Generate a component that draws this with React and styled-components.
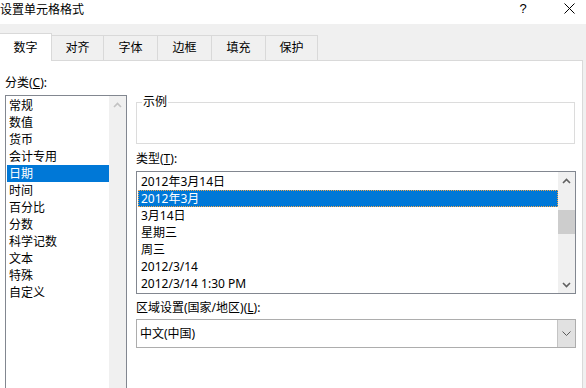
import React from 'react';
import styled, { createGlobalStyle } from 'styled-components';

const categories = ['常规', '数值', '货币', '会计专用', '日期', '时间', '百分比', '分数', '科学记数', '文本', '特殊', '自定义'];

const types = ['2012年3月14日', '2012年3月', '3月14日', '星期三', '周三', '2012/3/14', '2012/3/14 1:30 PM'];

const tabs = [
    { label: '数字', w: 53 },
    { label: '对齐', w: 53 },
    { label: '字体', w: 55 },
    { label: '边框', w: 55 },
    { label: '填充', w: 55 },
    { label: '保护', w: 53 },
];

const Chevron = ({ dir = 'up', color = '#606060' }) => (
    <svg width="9" height="6" viewBox="0 0 9 6">
        <path
            d={dir === 'up' ? 'M1 5 L4.5 1.5 L8 5' : 'M1 1 L4.5 4.5 L8 1'}
            fill="none"
            stroke={color}
            strokeWidth="1.6"
        />
    </svg>
);

const App = () => {
    return (
        <>
            <GlobalStyle />
            <Dialog>
                <TitleBar>
                    <Title>设置单元格格式</Title>
                    <CaptionButton>?</CaptionButton>
                    <CaptionButton>
                        <svg width="11" height="11" viewBox="0 0 11 11">
                            <path d="M0.5 0.5 L10.5 10.5 M10.5 0.5 L0.5 10.5" stroke="#000" strokeWidth="1" />
                        </svg>
                    </CaptionButton>
                </TitleBar>

                <Body>
                    <TabStrip>
                        {tabs.map((t, i) => (
                            <Tab key={t.label} $active={i === 0} $w={t.w}>
                                {t.label}
                            </Tab>
                        ))}
                    </TabStrip>

                    <Panel>
                        <LeftCol>
                            <Label>
                                分类(<Key>C</Key>):
                            </Label>
                            <ListBox $tall>
                                <Items>
                                    {categories.map((c) => (
                                        <Item key={c} $selected={c === '日期'} $pad={2}>
                                            {c}
                                        </Item>
                                    ))}
                                </Items>
                                <ScrollBar>
                                    <ArrowBtn>
                                        <Chevron dir="up" color="#c2c2c2" />
                                    </ArrowBtn>
                                </ScrollBar>
                            </ListBox>
                        </LeftCol>

                        <RightCol>
                            <Group>
                                <Legend>示例</Legend>
                            </Group>

                            <Label $top={6}>
                                类型(<Key>T</Key>):
                            </Label>
                            <ListBox>
                                <Items>
                                    {types.map((t) => (
                                        <Item key={t} $selected={t === '2012年3月'} $focus $pad={3}>
                                            {t}
                                        </Item>
                                    ))}
                                </Items>
                                <ScrollBar>
                                    <ArrowBtn>
                                        <Chevron dir="up" />
                                    </ArrowBtn>
                                    <Track>
                                        <Thumb />
                                    </Track>
                                    <ArrowBtn>
                                        <Chevron dir="down" />
                                    </ArrowBtn>
                                </ScrollBar>
                            </ListBox>

                            <Label $top={5}>
                                区域设置(国家/地区)(<Key>L</Key>):
                            </Label>
                            <Select>
                                <SelectValue>中文(中国)</SelectValue>
                                <DropButton>
                                    <svg width="9" height="5" viewBox="0 0 9 5">
                                        <path d="M0.5 0.5 L4.5 4.5 L8.5 0.5" fill="none" stroke="#5a5a5a" strokeWidth="1" />
                                    </svg>
                                </DropButton>
                            </Select>
                        </RightCol>
                    </Panel>
                </Body>
            </Dialog>
        </>
    );
};

const GlobalStyle = createGlobalStyle`
    html, body {
        margin: 0;
        padding: 0;
        background: #f0f0f0;
    }

    body {
        font-family: "Noto Sans", "Noto Sans CJK SC", sans-serif;
        font-size: 12px;
        color: #000;
    }
`;

const Dialog = styled.div`
    width: 586px;
    height: 388px;
    overflow: hidden;
    background: #f0f0f0;
    display: flex;
    flex-direction: column;
`;

const TitleBar = styled.div`
    height: 24px;
    flex: none;
    background: #fff;
    display: flex;
    align-items: center;
    overflow: hidden;
`;

const Title = styled.div`
    width: 500px;
    flex: none;
    line-height: 17px;
    margin-top: -5px;
`;

const CaptionButton = styled.div`
    width: 46px;
    flex: none;
    height: 24px;
    margin-top: -8px;
    display: flex;
    align-items: center;
    justify-content: center;
    font-family: "Liberation Sans", sans-serif;
    font-size: 13px;

    &:first-of-type {
        width: 45px;
    }
`;

const Body = styled.div`
    flex: 1;
    display: flex;
    flex-direction: column;
    padding-top: 9px;
    margin-left: -1px;
    margin-right: 3px;
`;

const TabStrip = styled.div`
    display: flex;
    align-items: flex-end;
    height: 28px;
    position: relative;
    z-index: 1;
`;

const Tab = styled.div`
    box-sizing: border-box;
    width: ${(p) => p.$w}px;
    margin-left: -1px;
    border: 1px solid #d9d9d9;
    border-bottom: none;
    text-align: center;
    line-height: 17px;
    background: ${(p) => (p.$active ? '#fff' : '#f0f0f0')};
    height: ${(p) => (p.$active ? 28 : 25)}px;
    padding-top: ${(p) => (p.$active ? 5 : 3)}px;
    margin-bottom: ${(p) => (p.$active ? 0 : 1)}px;

    &:first-child {
        margin-left: 0;
    }
`;

const Panel = styled.div`
    flex: 1;
    margin-top: -1px;
    background: #fff;
    border: 1px solid #d9d9d9;
    display: grid;
    grid-template-columns: 122px 440px;
    column-gap: 9px;
    align-items: start;
    padding-left: 5px;
`;

const LeftCol = styled.div`
    display: flex;
    flex-direction: column;
    padding-top: 13px;
`;

const RightCol = styled.div`
    display: flex;
    flex-direction: column;
    padding-top: 41px;
`;

const Label = styled.div`
    line-height: 17px;
    height: 17px;
    margin-top: ${(p) => p.$top || 0}px;
    margin-bottom: ${(p) => (p.$top === 5 ? 3 : 4)}px;
    white-space: nowrap;
`;

const Key = styled.span`
    text-decoration: underline;
`;

const ListBox = styled.div`
    box-sizing: border-box;
    height: ${(p) => (p.$tall ? 320 : 123)}px;
    border: 1px solid #828790;
    display: flex;
    background: #fff;
`;

const Items = styled.div`
    flex: 1;
    min-width: 0;
    padding: 1px 0 0 1px;
    display: flex;
    flex-direction: column;
`;

const Item = styled.div`
    box-sizing: border-box;
    height: 17px;
    line-height: 17px;
    padding-left: ${(p) => p.$pad}px;
    white-space: nowrap;
    background: ${(p) => (p.$selected ? '#0078d7' : 'transparent')};
    color: ${(p) => (p.$selected ? '#fff' : '#000')};
    outline: ${(p) => (p.$selected && p.$focus ? '1px dotted #f3a64a' : 'none')};
    outline-offset: -1px;
`;

const ScrollBar = styled.div`
    width: 17px;
    flex: none;
    background: #f0f0f0;
    display: flex;
    flex-direction: column;
`;

const ArrowBtn = styled.div`
    height: 17px;
    flex: none;
    display: flex;
    align-items: center;
    justify-content: center;
`;

const Track = styled.div`
    flex: 1;
`;

const Thumb = styled.div`
    margin-top: 21px;
    height: 24px;
    background: #cdcdcd;
`;

const Group = styled.div`
    position: relative;
    box-sizing: border-box;
    width: 439px;
    height: 42px;
    border: 1px solid #dcdcdc;
`;

const Legend = styled.div`
    position: absolute;
    top: -10px;
    left: 5px;
    padding: 0 1px;
    line-height: 17px;
    background: #fff;
`;

const Select = styled.div`
    box-sizing: border-box;
    height: 29px;
    border: 1px solid #adadad;
    display: flex;
    background: #fff;
`;

const SelectValue = styled.div`
    flex: 1;
    padding-left: 3px;
    line-height: 27px;
`;

const DropButton = styled.div`
    width: 17px;
    flex: none;
    background: #e1e1e1;
    border-left: 1px solid #c4c4c4;
    display: flex;
    align-items: center;
    justify-content: center;
`;

export default App;
